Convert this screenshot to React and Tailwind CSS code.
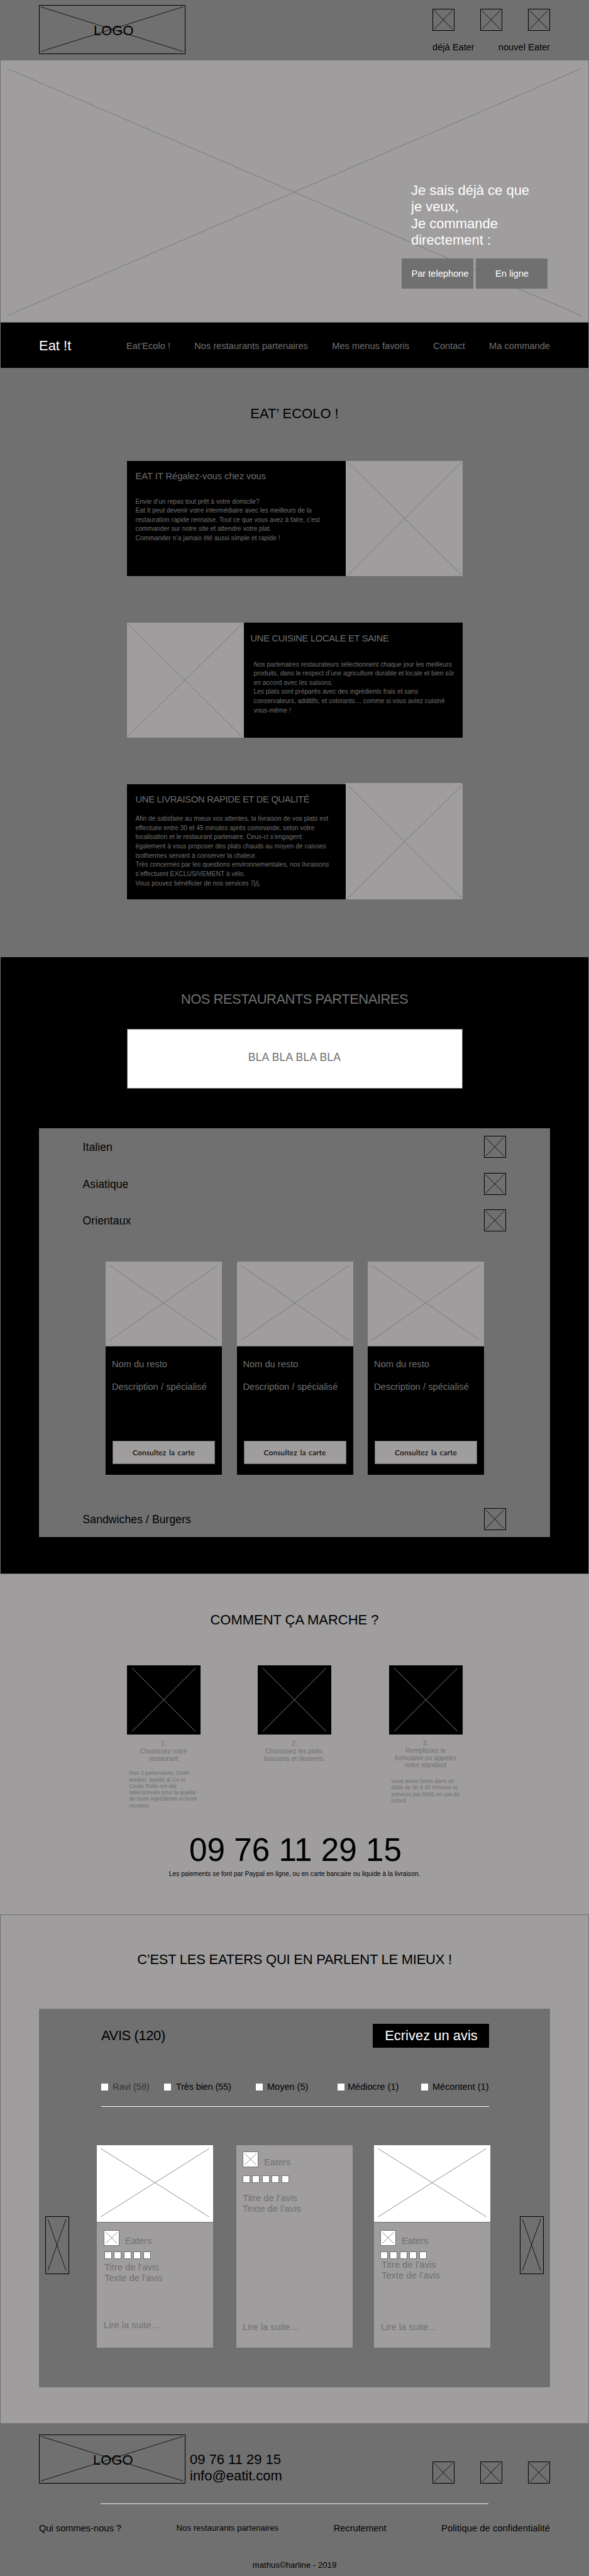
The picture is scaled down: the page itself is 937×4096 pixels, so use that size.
import React from "react";
import clsx from "clsx";

function Cross({ x1 = "3%", x2 = "97%", y1 = "3%", y2 = "97%", className }) {
  return (
    <svg className={clsx("block h-full w-full", className)} fill="none" stroke="currentColor" strokeWidth="0.8" aria-hidden="true">
      <line x1={x1} y1={y1} x2={x2} y2={y2} />
      <line x1={x2} y1={y1} x2={x1} y2={y2} />
    </svg>
  );
}

function IconBox({ className }) {
  return (
    <div className={clsx("h-[35px] w-[35px] shrink-0 border border-black text-black", className)}>
      <Cross x1="5%" x2="93%" y1="5%" y2="95%" />
    </div>
  );
}

function Logo({ className, textClass }) {
  return (
    <div className={clsx("relative h-[78px] w-[233px] border border-black text-black", className)}>
      <Cross x1="0.8%" x2="98.8%" y1="2.5%" y2="96%" />
      <span className={clsx("absolute text-[21.97px] leading-[26px]", textClass)}>LOGO</span>
    </div>
  );
}

function Header() {
  return (
    <header className="flex h-[96px] justify-between pr-[62px] pl-[62px]">
      <Logo className="mt-[8px]" textClass="top-[27px] left-[86px]" />
      <div className="w-[187px] pt-[14px]">
        <div className="flex justify-between">
          <IconBox />
          <IconBox />
          <IconBox />
        </div>
        <div className="mt-[17px] flex justify-between text-[14.65px] leading-[18px] whitespace-nowrap">
          <span>déjà Eater</span>
          <span>nouvel Eater</span>
        </div>
      </div>
    </header>
  );
}

function Hero() {
  return (
    <section className="relative flex h-[417px] justify-end border-x border-b border-[#707070] bg-[#9f9d9e]">
      <div className="absolute inset-0 text-[#707070]">
        <Cross x1="1.1%" x2="98.8%" y1="3.1%" y2="97.6%" />
      </div>
      <div className="relative mr-[65px] w-[232px] pt-[194px]">
        <p className="pl-[15px] text-[21.97px] leading-[26.4px] whitespace-nowrap text-white">
          Je sais déjà ce que
          <br />
          je veux,
          <br />
          Je commande
          <br />
          directement :
        </p>
        <div className="mt-[15px] flex gap-[4px] text-[14.65px] leading-[18px] whitespace-nowrap text-white">
          <button className="h-[48px] w-[114px] bg-[#707070] pl-[8px]">Par telephone</button>
          <button className="h-[48px] w-[114px] bg-[#707070] pl-[1px]">En ligne</button>
        </div>
      </div>
    </section>
  );
}

const NAV = ["Eat’Ecolo !", "Nos restaurants partenaires", "Mes menus favoris", "Contact", "Ma commande"];

function Nav() {
  return (
    <nav className="flex h-[72px] border-x border-[#707070] bg-black pr-[61px] pl-[61px]">
      <span className="mt-[24px] w-[139px] text-[21.97px] leading-[26px] text-white">Eat !t</span>
      <div className="mt-[28px] flex flex-1 justify-between text-[14.65px] leading-[18px] whitespace-nowrap text-[#707070]">
        {NAV.map((n) => (
          <span key={n}>{n}</span>
        ))}
      </div>
    </nav>
  );
}

function Feature({ title, lines, reverse, className, textClass, titleClass, bodyClass, children }) {
  return (
    <article className={clsx("mx-auto flex h-[183px] w-[534px]", reverse && "flex-row-reverse", className)}>
      <div className={clsx("w-[348px] bg-black whitespace-nowrap text-[#707070]", textClass)}>
        <h3 className={clsx("text-[14.65px] leading-[18px]", titleClass)}>{title}</h3>
        <p className={clsx("text-[10.25px] leading-[14.65px]", bodyClass)}>
          {lines.map((l) => (
            <span key={l} className="block">
              {l}
            </span>
          ))}
        </p>
      </div>
      <div className="relative w-[186px] bg-[#9f9d9e] text-[#707070]">
        {children}
        <Cross x1={reverse ? "1%" : "2%"} x2={reverse ? "98%" : "99%"} y1="1.2%" y2="98.8%" />
      </div>
    </article>
  );
}

function Ecolo() {
  return (
    <section className="h-[937px] pt-[60px]">
      <h2 className="text-center text-[21.97px] leading-[26px]">EAT’ ECOLO !</h2>
      <Feature
        className="mt-[62px]"
        textClass="pl-[14px] pt-[15px]"
        bodyClass="mt-[24.5px]"
        title="EAT IT Régalez-vous chez vous"
        lines={[
          "Envie d’un repas tout prêt à votre domicile?",
          "Eat It peut devenir votre intermédiaire avec les meilleurs de la",
          "restauration rapide rennaise. Tout ce que vous avez à faire, c’est",
          "commander sur notre site et attendre votre plat.",
          "Commander n’a jamais été aussi simple et rapide !",
        ]}
      />
      <Feature
        reverse
        className="mt-[74px]"
        textClass="pl-[11px] pt-[16px]"
        titleClass="tracking-[-0.25px]"
        bodyClass="mt-[25.5px] pl-[5px]"
        title="UNE CUISINE LOCALE ET SAINE"
        lines={[
          "Nos partenaires restaurateurs sélectionnent chaque jour les meilleurs",
          "produits, dans le respect d’une agriculture durable et locale et bien sûr",
          "en accord avec les saisons.",
          "Les plats sont préparés avec des ingrédients frais et sans",
          "conservateurs, additifs, et colorants… comme si vous aviez cuisiné",
          "vous-même !",
        ]}
      />
      <Feature
        className="mt-[74px]"
        textClass="pl-[14px] pt-[15px]"
        titleClass="tracking-[-0.25px]"
        bodyClass="mt-[15px]"
        title="UNE LIVRAISON RAPIDE ET DE QUALITÉ"
        lines={[
          "Afin de satisfaire au mieux vos attentes, la livraison de vos plats est",
          "effectuée entre 30 et 45 minutes après commande, selon votre",
          "localisation et le restaurant partenaire. Ceux-ci s’engagent",
          "également à vous proposer des plats chauds au moyen de caisses",
          "isothermes servant à conserver la chaleur.",
          "Très concernés par les questions environnementales, nos livraisons",
          "s’effectuent EXCLUSIVEMENT à vélo.",
          "Vous pouvez bénéficier de nos services 7j/j.",
        ]}
      >
        <div className="absolute -top-[2px] -left-[1px] h-[2px] w-[186px] bg-[#9f9d9e]" />
      </Feature>
    </section>
  );
}

function Category({ name, className }) {
  return (
    <div className={clsx("flex h-[35px] justify-between pr-[70px] pl-[69px]", className)}>
      <span className="pt-[8px] pl-[0.5px] text-[17.57px] leading-[20px] tracking-[0.08px]">{name}</span>
      <IconBox />
    </div>
  );
}

function RestoCard() {
  return (
    <article className="flex h-[339px] w-[185px] flex-col bg-black text-[14.65px] leading-[18px] text-[#707070]">
      <div className="h-[135px] border-b border-[#707070] bg-[#9f9d9e]">
        <Cross x1="3.5%" x2="96.2%" y1="4.6%" y2="93.4%" />
      </div>
      <div className="pl-[10px] whitespace-nowrap">
        <p className="mt-[19px]">Nom du resto</p>
        <p className="mt-[18px] tracking-[0.05px]">Description / spécialisé</p>
      </div>
      <button className="mt-[77px] ml-[11px] h-[37px] w-[163px] border border-[#707070] bg-[#9f9d9e] font-['Lato','Liberation_Sans',sans-serif] text-[12px] leading-[16px] font-medium tracking-[0.1px] [word-spacing:1.5px] whitespace-nowrap text-black">
        Consultez la carte
      </button>
    </article>
  );
}

function Partners() {
  return (
    <section className="h-[981px] border-x border-b border-[#707070] bg-black pt-[54px]">
      <h2 className="text-center text-[21.97px] leading-[26px] tracking-[-0.5px] text-[#707070]">NOS RESTAURANTS PARTENAIRES</h2>
      <div className="mx-auto mt-[34px] flex h-[95px] w-[534px] items-center justify-center border border-[#707070] bg-white pb-[6px] text-[17.57px] leading-[20px] tracking-[0.2px] text-[#707070]">
        BLA BLA BLA BLA
      </div>
      <div className="mx-[61px] mt-[63px] h-[650px] bg-[#707070] pt-[12px] text-black">
        <Category name="Italien" />
        <Category name="Asiatique" className="mt-[24px]" />
        <Category name="Orientaux" className="mt-[23px]" />
        <div className="mt-[48px] flex justify-between pr-[105px] pl-[106px]">
          <RestoCard />
          <RestoCard />
          <RestoCard />
        </div>
        <Category name="Sandwiches / Burgers" className="mt-[53px]" />
      </div>
    </section>
  );
}

function Step({ head, body, headClass, bodyClass }) {
  return (
    <div className="w-[117px] whitespace-nowrap text-[#707070]">
      <div className="h-[110px] bg-black text-[#9f9d9e]">
        <Cross x1="7%" x2="93%" y1="4%" y2="95.5%" />
      </div>
      <p className={clsx("text-center text-[10.25px] leading-[11.75px]", headClass)}>
        {head.map((l) => (
          <span key={l} className="block">
            {l}
          </span>
        ))}
      </p>
      {body && (
        <p className={clsx("pl-[4px] text-[8.79px] leading-[10.25px]", bodyClass)}>
          {body.map((l) => (
            <span key={l} className="block">
              {l}
            </span>
          ))}
        </p>
      )}
    </div>
  );
}

function HowItWorks() {
  return (
    <section className="h-[541px] bg-[#9f9d9e] pt-[60px]">
      <h2 className="text-center text-[21.97px] leading-[26px]">COMMENT ÇA MARCHE ?</h2>
      <div className="mx-auto mt-[59px] flex h-[265px] w-[534px] justify-between">
        <Step
          headClass="mt-[9px]"
          bodyClass="mt-[12px]"
          head={["1.", "Choisissez votre", "restaurant"]}
          body={[
            "Nos 3 partenaires, Sushi",
            "Market, Basilic & Co et",
            "Cedar Rolls ont été",
            "sélectionnés pour la qualité",
            "de leurs ingrédients et leurs",
            "recettes.",
          ]}
        />
        <Step headClass="mt-[9px]" head={["2.", "Choisissez les plats,", "boissons et desserts."]} />
        <Step
          headClass="mt-[8px]"
          bodyClass="mt-[14px]"
          head={["3.", "Remplissez le", "formulaire ou appelez", "notre standard"]}
          body={["Vous serez livrés dans un", "délai de 30 à 45 minutes et", "prévenu par SMS en cas de", "retard."]}
        />
      </div>
      <p className="pl-[3px] text-center text-[51.26px] leading-[58px]">09 76 11 29 15</p>
      <p className="mt-[2px] text-center text-[10.25px] leading-[14px]">
        Les paiements se font par Paypal en ligne, ou en carte bancaire ou liquide à la livraison.
      </p>
    </section>
  );
}

const FILTERS = [
  { label: "Ravi (58)", gap: "ml-[7px] text-[#333333]" },
  { label: "Très bien (55)", gap: "ml-[8px] tracking-[-0.15px]" },
  { label: "Moyen (5)", gap: "ml-[7px]" },
  { label: "Médiocre (1)", gap: "ml-[5px]" },
  { label: "Mécontent (1)", gap: "ml-[7px]" },
];

function ReviewCard({ image, className, authorClass, ratingClass, textClass, moreClass }) {
  return (
    <article className={clsx("h-[322px] w-[185px] shrink-0 bg-[#9f9d9e] text-[14.65px] whitespace-nowrap text-[#707070]", className)}>
      {image && (
        <div className="h-[123px] border-b border-[#707070] bg-white">
          <Cross x1="3.4%" x2="96.6%" y1="4.3%" y2="93.4%" />
        </div>
      )}
      <div className={clsx("flex", authorClass)}>
        <div className="h-[25px] w-[25px] border border-[#707070] bg-white">
          <Cross x1="10%" x2="90%" y1="10%" y2="88%" />
        </div>
        <span className="mt-[9px] ml-[9px] leading-[17px]">Eaters</span>
      </div>
      <div className={clsx("flex gap-[3.4px]", ratingClass)}>
        {[0, 1, 2, 3, 4].map((i) => (
          <div key={i} className="h-[12px] w-[12px] border border-[#707070] bg-white" />
        ))}
      </div>
      <p className={clsx("leading-[17px] tracking-[0.08px]", textClass)}>
        Titre de l’avis
        <br />
        Texte de l’avis
      </p>
      <p className={clsx("leading-[17px] tracking-[0.05px]", moreClass)}>Lire la suite…</p>
    </article>
  );
}

function Arrow({ className }) {
  return (
    <div className={clsx("mt-[113px] h-[92px] w-[38px] shrink-0 border border-black text-black", className)}>
      <Cross x1="9%" x2="89%" y1="4%" y2="95%" />
    </div>
  );
}

function Reviews() {
  return (
    <section className="h-[809px] border-x border-t border-[#707070] bg-[#9f9d9e] pt-[58px]">
      <h2 className="text-center text-[21.97px] leading-[26px] tracking-[-0.25px]">C’EST LES EATERS QUI EN PARLENT LE MIEUX !</h2>
      <div className="mx-[61px] mt-[65px] h-[602px] bg-[#707070] pt-[24px]">
        <div className="flex h-[38px] justify-between pr-[97px] pl-[99px] text-[21.97px] leading-[26px] whitespace-nowrap">
          <h3 className="pt-[6px] tracking-[-0.4px]">AVIS (120)</h3>
          <button className="w-[185px] bg-black pl-[1px] text-white">Ecrivez un avis</button>
        </div>
        <div className="mt-[53px] grid grid-cols-[100px_146px_130px_133px_auto] pl-[99px] text-[14.5px] leading-[18px] whitespace-nowrap">
          {FILTERS.map((f) => (
            <div key={f.label} className="flex">
              <div className="mt-[4px] h-[11px] w-[11px] bg-white" />
              <span className={f.gap}>{f.label}</span>
            </div>
          ))}
        </div>
        <div className="mt-[22px] mr-[97px] ml-[99px] h-px bg-white" />
        <div className="mt-[61px] flex pl-[10px]">
          <Arrow />
          <ReviewCard
            image
            className="ml-[44px]"
            authorClass="pt-[12px] pl-[11px]"
            ratingClass="mt-[8px] pl-[12px]"
            textClass="mt-[5px] pl-[12px]"
            moreClass="mt-[58px] pl-[11px]"
          />
          <ReviewCard
            className="ml-[37px]"
            authorClass="pt-[10px] pl-[10px]"
            ratingClass="mt-[12px] pl-[10px]"
            textClass="mt-[16px] pl-[10px]"
            moreClass="mt-[171px] pl-[10px]"
          />
          <ReviewCard
            image
            className="ml-[34px]"
            authorClass="pt-[12px] pl-[10px]"
            ratingClass="mt-[8px] pl-[10px]"
            textClass="mt-[1px] pl-[12px]"
            moreClass="mt-[65px] pl-[11px]"
          />
          <Arrow className="ml-[47px]" />
        </div>
      </div>
    </section>
  );
}

function Footer() {
  return (
    <footer className="h-[243px] px-[62px] pt-[18px]">
      <div className="flex h-[78px]">
        <Logo textClass="top-[27px] left-[85px]" />
        <p className="mt-[27px] ml-[7px] text-[21.97px] leading-[26.4px]">
          09 76 11 29 15
          <br />
          info@eatit.com
        </p>
        <div className="mt-[43px] ml-auto flex w-[187px] justify-between">
          <IconBox />
          <IconBox />
          <IconBox />
        </div>
      </div>
      <div className="mx-[98px] mt-[31px] h-[2px] bg-[#b7b7b7]" />
      <div className="mt-[29px] flex justify-between text-[14.65px] leading-[18px] whitespace-nowrap">
        <span>Qui sommes-nous ?</span>
        <span className="text-[13.18px]">Nos restaurants partenaires</span>
        <span>Recrutement</span>
        <span className="tracking-[0.1px]">Politique de confidentialité</span>
      </div>
      <p className="mt-[41px] text-center text-[13.18px] leading-[18px]">mathus©harline - 2019</p>
    </footer>
  );
}

export default function App() {
  return (
    <div className="w-[937px] overflow-hidden bg-[#707070] font-['Liberation_Sans',Arial,sans-serif] text-black">
      <Header />
      <Hero />
      <Nav />
      <Ecolo />
      <Partners />
      <HowItWorks />
      <Reviews />
      <Footer />
    </div>
  );
}
